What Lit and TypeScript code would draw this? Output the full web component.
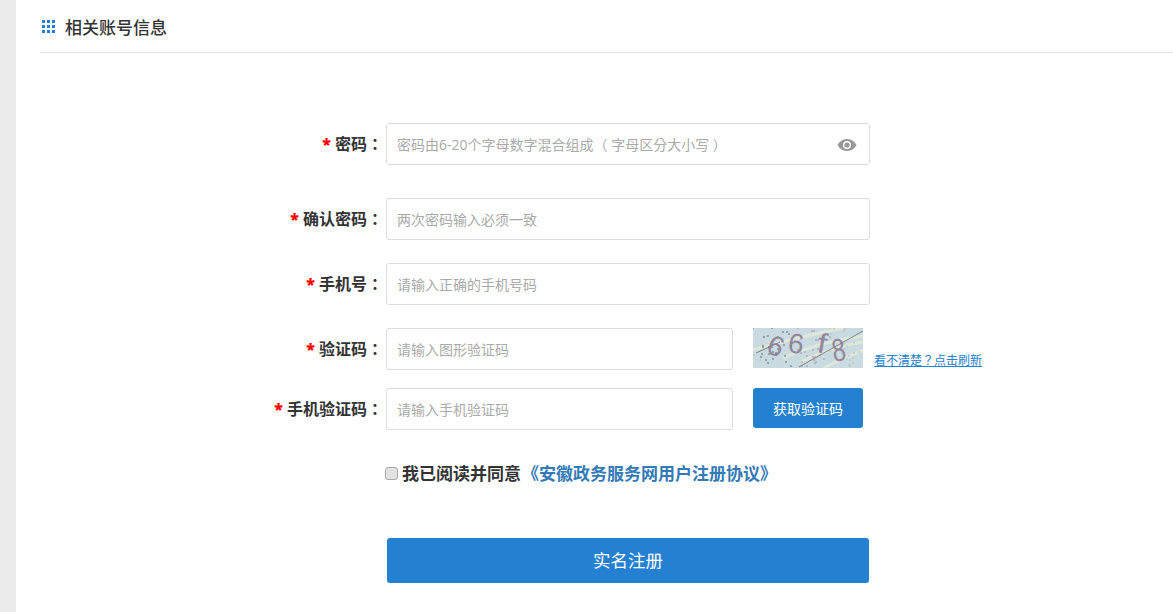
import { LitElement, html, css, svg } from "lit";
import { customElement } from "lit/decorators.js";

const dots = Array.from({ length: 80 }, (_, i) => ({
  x: (i * 37 + (i * i) % 23) % 110,
  y: (i * 17 + (i * i * 3) % 19) % 40,
  c: i % 3 === 0 ? "#3f444a" : i % 3 === 1 ? "#8d7a93" : "#a9b7a8",
}));

const FONT = css`"Open Sans", "Noto Sans CJK SC", sans-serif`;

@customElement("app-root")
export class AppRoot extends LitElement {
  static styles = css`
    :host { display: block; height: 612px; overflow: hidden; background: #fff; font-family: ${FONT}; color: #333; }
    * { box-sizing: border-box; }
    .page { display: flex; height: 612px; }
    .side { width: 16px; background: #ececec; flex: none; }
    .main { flex: 1; padding-left: 24px; min-width: 0; }
    .head { height: 53px; border-bottom: 1px solid #e4e4e4; display: flex; align-items: center; gap: 10px; padding: 3px 0 0 2px; }
    .head h2 { margin: 0; font-size: 17px; line-height: 21px; font-weight: 500; color: #333; }
    .grid { display: grid; grid-template-columns: repeat(3, 3px); gap: 2px; margin-top: -2px; }
    .grid i { width: 3px; height: 3px; background: #2480d1; }
    .form { padding-top: 70px; }
    .row { display: flex; align-items: flex-start; height: 42px; }
    .r2 { margin-top: 33px; } .r3, .r4 { margin-top: 23px; } .r5 { margin-top: 18px; }
    .label { width: 346px; flex: none; text-align: right; font-size: 16px; font-weight: 700; line-height: 42px; color: #333; white-space: nowrap; padding-right: 3px; }
    .label b { color: #f00; font-size: 16px; }
    .tc { font-family: "Open Sans", "Noto Sans CJK TC", sans-serif; }
    .field { position: relative; width: 484px; height: 42px; flex: none; }
    .field.short { width: 347px; }
    input.text { width: 100%; height: 100%; border: 1px solid #ddd; border-radius: 3px; padding: 0 10px; font: 14px/40px ${FONT}; outline: none; background: #fff; }
    input.text::placeholder { color: #aaa; opacity: 1; }
    input.pw { font-family: "Open Sans", "Noto Sans CJK TC", sans-serif; }
    .eye { position: absolute; right: 13px; top: 15px; width: 20px; height: 14px; display: block; }
    .cap { width: 110px; height: 40px; margin-left: 20px; flex: none; display: block; }
    .refresh { margin: 25px 0 0 11px; font-size: 12px; line-height: 16px; color: #2480d1; text-decoration: underline; white-space: nowrap; }
    .sms { margin-left: 20px; width: 110px; height: 40px; border: 0; border-radius: 3px; background: #2480d1; color: #fff; font: 14px ${FONT}; padding: 0; flex: none; }
    .agree { display: flex; align-items: center; margin: 30px 0 0 345px; height: 24px; font-size: 17px; font-weight: 700; color: #333; white-space: nowrap; }
    .agree input { appearance: none; width: 13px; height: 13px; margin: 3px 4px 0 0; flex: none; background: #e2e2e2; border: 1px solid #a9a9a9; border-radius: 3px; }
    .agree a { color: #337ab7; text-decoration: none; margin-left: 1px; }
    .submit { display: block; margin: 54px 0 0 347px; width: 482px; height: 45px; border: 0; border-radius: 3px; background: #2480d1; color: #fff; font: 17.5px ${FONT}; padding: 0 0 3px; }
  `;

  private captcha() {
    return html`<svg class="cap" viewBox="0 0 110 40" role="img" aria-label="验证码">
      <rect width="110" height="40" fill="#c9dbe0" />
      ${svg`<path d="M0 22 Q40 10 90 0 M30 30 Q65 14 110 8 M48 34 Q80 18 110 14 M70 40 L110 22" stroke="#dfe6da" stroke-width="3" fill="none"/>`}
      ${svg`<path d="M46 39 L110 3 M3 25 L27 14" stroke="#7b8286" stroke-width="1" fill="none"/>`}
      ${dots.map((d) => svg`<circle cx=${d.x} cy=${d.y} r="0.7" fill=${d.c}/>`)}
      ${svg`<g font-family="Liberation Sans, sans-serif" fill="#8d7a93" fill-opacity=".9">
        <text transform="translate(12 24) rotate(22)" font-size="28">6</text>
        <text transform="translate(34 24) rotate(8)" font-size="28">6</text>
        <text transform="translate(63 24) rotate(10) scale(1.2 1)" font-size="28">f</text>
        <text transform="translate(81 34) rotate(-10) scale(.75 1)" font-size="32">8</text>
      </g>`}
    </svg>`;
  }

  private lab(t: string) {
    return html`<div class="label"><b>*</b> ${t}<span class="tc">：</span></div>`;
  }

  render() {
    return html`<div class="page">
      <div class="side"></div>
      <div class="main">
        <div class="head">
          <div class="grid">${Array.from({ length: 9 }, () => html`<i></i>`)}</div>
          <h2>相关账号信息</h2>
        </div>
        <div class="form">
          <div class="row">
            ${this.lab("密码")}
            <div class="field">
              <input class="text pw" placeholder="密码由6-20个字母数字混合组成（ 字母区分大小写 ）" />
              <svg class="eye" viewBox="0 0 20 14"><path fill="#999" fill-rule="evenodd" d="M10 1C5.5 1 2 4 .5 7 2 10 5.5 13 10 13s8-3 9.500-6C18 4 14.500 1 10 1Zm0 2a4 4 0 1 1 0 8 4 4 0 0 1 0-8Z"/><circle cx="10" cy="7" r="2.600" fill="#999"/></svg>
            </div>
          </div>
          <div class="row r2">
            ${this.lab("确认密码")}
            <div class="field"><input class="text" placeholder="两次密码输入必须一致" /></div>
          </div>
          <div class="row r3">
            ${this.lab("手机号")}
            <div class="field"><input class="text" placeholder="请输入正确的手机号码" /></div>
          </div>
          <div class="row r4">
            ${this.lab("验证码")}
            <div class="field short"><input class="text" placeholder="请输入图形验证码" /></div>
            ${this.captcha()}
            <a class="refresh">看不清楚<span class="tc">？</span>点击刷新</a>
          </div>
          <div class="row r5">
            ${this.lab("手机验证码")}
            <div class="field short"><input class="text" placeholder="请输入手机验证码" /></div>
            <button class="sms">获取验证码</button>
          </div>
          <label class="agree"><input type="checkbox" disabled />我已阅读并同意<a>《安徽政务服务网用户注册协议》</a></label>
          <button class="submit">实名注册</button>
        </div>
      </div>
    </div>`;
  }
}
